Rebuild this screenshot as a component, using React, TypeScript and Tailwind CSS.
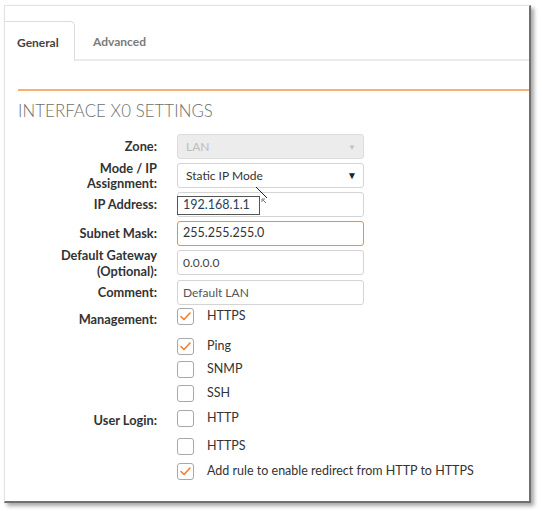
import React from "react";

const font = { fontFamily: "Lato, 'Open Sans', sans-serif" };

function Check({ checked }: { checked: boolean }) {
  return (
    <div className="w-[17px] h-[17px] border border-[#a8a8a8] rounded-[3px] bg-white flex items-center justify-center shrink-0">
      {checked && (
        <svg width="13" height="11" viewBox="0 0 13 11">
          <path d="M2 5.5 L5 8.5 L11 2" fill="none" stroke="#f47a26" strokeWidth="1.5" strokeLinecap="round" strokeLinejoin="round" />
        </svg>
      )}
    </div>
  );
}

function Row({ label, children, h = "h-[25px]", mt = "", lblCls = "" }: { label?: React.ReactNode; children: React.ReactNode; h?: string; mt?: string; lblCls?: string }) {
  return (
    <div className={`flex items-center ${h} ${mt}`}>
      <div className={`w-[152px] text-right text-[12.8px] font-bold text-[#333] leading-[15px] ${lblCls}`}>{label}</div>
      <div className="ml-[20px] flex items-center h-full">{children}</div>
    </div>
  );
}

function CheckRow({ label, checked, mt, side, sideCls }: { label: string; checked: boolean; mt: string; side?: string; sideCls?: string }) {
  return (
    <div className={`flex items-center h-[20px] ${mt}`}>
      <div className={`w-[152px] text-right text-[12.8px] font-bold text-[#333] ${sideCls ?? ""}`}>{side}</div>
      <div className="ml-[20px] flex items-center">
        <Check checked={checked} />
        <span className="ml-[13px] text-[12.5px] text-[#333]">{label}</span>
      </div>
    </div>
  );
}

export default function App() {
  return (
    <div className="w-[542px] h-[511px] bg-white overflow-hidden" style={font}>
      <div className="ml-[4px] mt-[5px] w-[527px] h-[498px] bg-white border-l border-t border-[#e2e2e2] border-r-2 border-b-2 border-r-[#707070] border-b-[#707070] shadow-[3px_3px_4px_rgba(0,0,0,0.35)]">
        {/* Tabs */}
        <div className="mt-[17px] flex items-end border-b-2 border-[#ebebeb] h-[38px]">
          <div className="w-[70px] h-[40px] -mb-[2px] bg-white border-t border-r border-[#dcdcdc] rounded-tr-[5px] flex items-center pl-[12px] pt-[2px] text-[12px] font-bold text-[#444]">
            General
          </div>
          <div className="ml-[18px] h-[38px] flex items-center pt-[4px] text-[12px] font-bold text-[#7a7a7a]">Advanced</div>
        </div>
        {/* orange line */}
        <div className="mt-[28px] ml-[13px] h-[2px] bg-[#ffae72]" />
        <div className="mt-[10px] ml-[13px] text-[16.8px] font-light text-[#6e6e6e] leading-[20px] tracking-[0.1px]">INTERFACE X0 SETTINGS</div>

        <div className="mt-[13px]">
          <Row label="Zone:">
            <div className="w-[187px] h-[25px] bg-[#ececec] border border-[#dcdcdc] rounded-[3px] flex items-center justify-between pl-[8px] pr-[7px] text-[12px] text-[#bdbdbd]">
              <span>LAN</span>
              <span className="text-[8px] text-[#c4c4c4]">▼</span>
            </div>
          </Row>
          <Row label={<><div>Mode / IP</div><div>Assignment:</div></>} mt="mt-[4px]">
            <div className="w-[187px] h-[25px] bg-white border border-[#d4d4d4] rounded-[3px] flex items-center justify-between pl-[8px] pr-[6px] text-[12px] text-[#333]">
              <span>Static IP Mode</span>
              <span className="text-[10px] text-[#222]">▼</span>
            </div>
          </Row>
          <Row label="IP Address:" mt="mt-[4px]">
            <div className="relative w-[187px] h-[25px] bg-white border border-[#d4d4d4] rounded-[3px]">
              <div className="absolute left-[-1px] top-[3px] w-[83px] h-[19px] bg-white border border-[#555] flex items-center pl-[5px] text-[12.5px] text-[#2c3e55]">
                192.168.1.1
              </div>
              <svg className="absolute left-[77px] top-[-7px]" width="16" height="22" viewBox="0 0 16 22">
                <line x1="1" y1="1" x2="12" y2="12" stroke="#222" strokeWidth="1" />
                <path d="M7 13 L7 16 M7 13 L10 13 M8 14 L11 17" stroke="#555" strokeWidth="0.8" fill="none" />
              </svg>
            </div>
          </Row>
          <Row label="Subnet Mask:" mt="mt-[4px]">
            <div className="w-[187px] h-[25px] bg-white border border-[#f58b3c] rounded-[3px] flex items-center pl-[5px] text-[12.5px] text-[#333]">
              255.255.255.0
            </div>
          </Row>
          <Row label={<><div>Default Gateway</div><div>(Optional):</div></>} mt="mt-[4px]" lblCls="leading-[16px]">
            <div className="w-[187px] h-[25px] bg-white border border-[#d4d4d4] rounded-[3px] flex items-center pl-[5px] text-[12px] text-[#444]">
              0.0.0.0
            </div>
          </Row>
          <Row label="Comment:" mt="mt-[5px]">
            <div className="w-[187px] h-[25px] bg-white border border-[#d4d4d4] rounded-[3px] flex items-center pl-[5px] text-[12px] text-[#555]">
              Default LAN
            </div>
          </Row>

          <CheckRow side="Management:" sideCls="pt-[8px]" label="HTTPS" checked mt="mt-[1px]" />
          <CheckRow label="Ping" checked mt="mt-[10px]" />
          <CheckRow label="SNMP" checked={false} mt="mt-[3px]" />
          <CheckRow label="SSH" checked={false} mt="mt-[4px]" />
          <CheckRow side="User Login:" sideCls="pt-[6px]" label="HTTP" checked={false} mt="mt-[5px]" />
          <CheckRow label="HTTPS" checked={false} mt="mt-[8px]" />
          <CheckRow label="Add rule to enable redirect from HTTP to HTTPS" checked mt="mt-[5px]" />
        </div>
      </div>
    </div>
  );
}
